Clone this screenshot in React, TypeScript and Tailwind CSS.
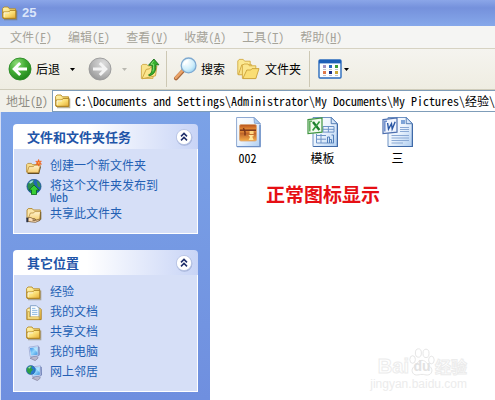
import { useState } from 'react'
import type { ReactNode } from 'react'
import clsx from 'clsx'

const MENUS = [
  { label: '文件', key: 'F' },
  { label: '编辑', key: 'E' },
  { label: '查看', key: 'V' },
  { label: '收藏', key: 'A' },
  { label: '工具', key: 'T' },
  { label: '帮助', key: 'H' },
]

const TASKS = [
  { label: '创建一个新文件夹', icon: <NewFolderIcon /> },
  { label: '将这个文件夹发布到 Web', icon: <PublishIcon /> },
  { label: '共享此文件夹', icon: <ShareFolderIcon /> },
]

const PLACES = [
  { label: '经验', icon: <FolderIcon /> },
  { label: '我的文档', icon: <DocumentsIcon /> },
  { label: '共享文档', icon: <FolderIcon /> },
  { label: '我的电脑', icon: <ComputerIcon /> },
  { label: '网上邻居', icon: <NetworkIcon /> },
]

const FILES = [
  { name: '002', icon: <PictureFileIcon /> },
  { name: '模板', icon: <ExcelFileIcon /> },
  { name: '三', icon: <WordFileIcon /> },
]

// shared gradients, referenced by id from every icon
function IconDefs() {
  return (
    <svg className="absolute h-0 w-0" aria-hidden="true">
      <defs>
        <linearGradient id="folder" x1="0" y1="0" x2="1" y2="1">
          <stop offset="0" stopColor="#fff6b8" />
          <stop offset="0.5" stopColor="#fbdf76" />
          <stop offset="1" stopColor="#e3ab33" />
        </linearGradient>
        <linearGradient id="openFolder" x1="0" y1="0" x2="0" y2="1">
          <stop offset="0" stopColor="#fff3cf" />
          <stop offset="1" stopColor="#f6cf72" />
        </linearGradient>
        <linearGradient id="paper" x1="0" y1="0" x2="1" y2="1">
          <stop offset="0" stopColor="#ffffff" />
          <stop offset="0.5" stopColor="#eaf3fd" />
          <stop offset="1" stopColor="#aecdf0" />
        </linearGradient>
        <radialGradient id="green" cx="0.35" cy="0.25" r="0.8">
          <stop offset="0" stopColor="#8fdc78" />
          <stop offset="0.5" stopColor="#43ad35" />
          <stop offset="1" stopColor="#1f851b" />
        </radialGradient>
        <radialGradient id="gray" cx="0.35" cy="0.25" r="0.8">
          <stop offset="0" stopColor="#dcdcdc" />
          <stop offset="0.6" stopColor="#b7b7b7" />
          <stop offset="1" stopColor="#979797" />
        </radialGradient>
        <radialGradient id="glass" cx="0.35" cy="0.3" r="0.8">
          <stop offset="0" stopColor="#ffffff" />
          <stop offset="0.6" stopColor="#cfeefb" />
          <stop offset="1" stopColor="#8fcdf0" />
        </radialGradient>
        <linearGradient id="screen" x1="0" y1="0" x2="1" y2="1">
          <stop offset="0" stopColor="#2f86e6" />
          <stop offset="0.5" stopColor="#8fd4fb" />
          <stop offset="1" stopColor="#3b8fe0" />
        </linearGradient>
        <linearGradient id="sunset" x1="0" y1="0" x2="0" y2="1">
          <stop offset="0" stopColor="#b5521f" />
          <stop offset="0.35" stopColor="#f0973a" />
          <stop offset="0.55" stopColor="#c0672b" />
          <stop offset="1" stopColor="#f6ae48" />
        </linearGradient>
      </defs>
    </svg>
  )
}

function FolderIcon() {
  return (
    <svg viewBox="0 0 16 16" className="h-4 w-4 shrink-0">
      <path d="M2 14.5h12.6V5.4" fill="none" stroke="#7a6a3a" strokeOpacity="0.5" strokeWidth="1.4" />
      <path d="M.6 12.8V3.6L2 2h4l1.4 1.8h6.2v9.6H1.2Z" fill="url(#folder)" stroke="#b58a24" strokeWidth="0.9" />
      <path d="M1.2 13.3V7h5.4l1.5-1.6h5.7v7.9Z" fill="url(#folder)" stroke="#a87c1c" strokeWidth="0.9" />
      <path d="M2 12V7.8h5" fill="none" stroke="#fffbe0" strokeWidth="0.9" />
    </svg>
  )
}

function NewFolderIcon() {
  return (
    <svg viewBox="0 0 16 16" className="h-4 w-4 shrink-0">
      <path d="M1.6 14.4h11l1.8-7" fill="none" stroke="#5a4a2a" strokeWidth="1.4" />
      <path d="M.6 13V5.6l1.2-1.2h3.6l1 1.2h6.4V13Z" fill="#f8dc8a" stroke="#b58a3a" strokeWidth="0.8" />
      <path d="m1 13.6 2-6h4.4l1-1.4h6l-2 7.4Z" fill="url(#openFolder)" stroke="#b58a3a" strokeWidth="0.8" />
      <path d="m12.6.4.8 2 2-.4-1.2 1.7 1.4 1.6-2.1-.1-.7 2-.9-1.9-2.1.3 1.3-1.7-1.4-1.6 2.1.2Z" fill="#f0641e" stroke="#f0641e" strokeWidth="0.6" />
      <circle cx="12.7" cy="3.8" r="0.9" fill="#ffb45a" />
    </svg>
  )
}

function PublishIcon() {
  return (
    <svg viewBox="0 0 16 16" className="h-4 w-4 shrink-0">
      <circle cx="8" cy="7.4" r="7.1" fill="#2166b4" stroke="#164a86" strokeWidth="0.6" />
      <path d="M2 4.8C4 1.9 6 .9 8.4 1.2L7 3.6 8.6 5.2 5.4 8.6 4 12C1.6 10 .9 7.4 2 4.8Z" fill="#2c8f4a" />
      <path d="M3.2 3.4C4.4 2 6 1.4 7.6 1.6L6.2 3.6 4 4.8Z" fill="#9edbe6" />
      <path d="M10.5 1.4c3 1.2 4.4 4 3.8 7L11.8 7.4l-.6-3Z" fill="#37974c" />
      <path d="m8 6 5.2 5h-2.7v4.6h-5V11H2.8Z" fill="#38cf35" stroke="#0f6a1c" strokeWidth="0.9" />
    </svg>
  )
}

function ShareFolderIcon() {
  return (
    <svg viewBox="0 0 16 16" className="h-4 w-4 shrink-0">
      <path d="M1 12V3l1.2-1.4h4L7.4 3h7v9Z" fill="#fbe6ab" stroke="#b08526" strokeWidth="0.9" />
      <path d="m2 12 2.4-6h3.2l1-1.4h6l-1.2 8.4H4Z" fill="url(#openFolder)" stroke="#b58a3a" strokeWidth="0.8" />
      <path d="M14.8 4.8v7.6l-2 1.8" fill="none" stroke="#6a531f" strokeWidth="0.9" />
      <path d="M2 11c2-1 3.2-.4 4.2.4l2.8.4c.8.3.6 1.2-.2 1.3H6.6l3.6.2 2.6-1c1-.3 1.4.7.5 1.2l-3.7 1.8-4.2-.4L2 14.4Z" fill="#fbdcb6" stroke="#6a4a20" strokeWidth="0.7" />
      <path d="M.3 10.6h1.9v4.6H.3Z" fill="#2c3345" />
    </svg>
  )
}

function DocumentsIcon() {
  return (
    <svg viewBox="0 0 16 16" className="h-4 w-4 shrink-0">
      <path d="M.8 14.6V4.6L2.4 3h11.2l1.6 1.6v10Z" fill="url(#folder)" stroke="#a87c1c" strokeWidth="0.9" />
      <path d="M4.4.7h6l2.6 2.6v9.4H4.4Z" fill="#fafdff" stroke="#7a9cc4" strokeWidth="0.9" />
      <path d="M6 3.4h3.4M6 5.4h5.4M6 7.4h5.4M6 9.4h5.4" stroke="#86b3e0" strokeWidth="0.9" />
      <path d="M1.6 14.2V6.6h1.8v5.2h9.8V14.2Z" fill="#fbe48c" stroke="#b78d2b" strokeWidth="0.6" />
    </svg>
  )
}

function MonitorShape() {
  return (
    <>
      <path d="m4 13.2 3-1.6 3.6-.4 1.6 1.8-3 2.6Z" fill="#b9b7cc" stroke="#807f9c" strokeWidth="0.7" />
      <path d="m11.6 1.2 1.8.8.2 8-2 1.8Z" fill="#5c6ea8" />
      <path d="m3 2.2 9.2-1.4.4 9.8-8.4 1Z" fill="#dfe8fa" stroke="#8495c8" strokeWidth="0.6" />
      <path d="m4 3 7.4-1.1.3 7.8-6.7.8Z" fill="url(#screen)" />
      <path d="m7 2.8 4-.6.3 5Z" fill="#b9e6ff" fillOpacity="0.9" />
    </>
  )
}

function ComputerIcon() {
  return (
    <svg viewBox="0 0 16 16" className="h-4 w-4 shrink-0">
      <MonitorShape />
    </svg>
  )
}

function NetworkIcon() {
  return (
    <svg viewBox="0 0 16 16" className="h-4 w-4 shrink-0">
      <g transform="translate(2.2 0)">
        <MonitorShape />
      </g>
      <circle cx="4.8" cy="5" r="4.5" fill="#2a78cc" stroke="#1c558e" strokeWidth="0.5" />
      <path d="M1 3.6C2.2 1.6 4 .6 6 1L5.2 3.2 7.2 4.6 5 6.8 4.4 9.2C1.4 8.4.2 6 1 3.6Z" fill="#2f9f46" />
      <path d="M2 3c.8-1 1.8-1.4 3-1.4L3.8 3.4Z" fill="#a6e2b0" />
    </svg>
  )
}

function ArrowBall({ flip, disabled }: { flip?: boolean; disabled?: boolean }) {
  return (
    <svg viewBox="0 0 24 24" className={clsx('h-6 w-6 shrink-0', flip && '-scale-x-100')}>
      <circle cx="12" cy="12" r="11" fill={disabled ? 'url(#gray)' : 'url(#green)'} stroke={disabled ? '#9a9a9a' : '#2b8a26'} strokeWidth="0.9" />
      <path d="M19 12H6.5M12.2 6 6.2 12l6 6" fill="none" stroke={disabled ? '#f3f3f3' : '#ffffff'} strokeWidth="3" />
    </svg>
  )
}

function UpFolderIcon() {
  return (
    <svg viewBox="0 0 20 22" className="h-6 w-5 shrink-0">
      <path d="M1.4 20.4V7.6L2.8 6.4h4l1.2 1.5h5v12.5Z" fill="#f9e48f" stroke="#d0a944" strokeWidth="0.9" />
      <path d="m2 20.8 4.2-9.4 3.4-.6 1.3-1.6 6-1.2-1.4 9.8Z" fill="#fbe58c" stroke="#c9a03c" strokeWidth="0.9" />
      <path d="M8.6 16.8c3-1.2 3.8-4 3.5-9.6H8.6L13.9 1l5 5.8h-3.1c.4 6.6-1.8 9.8-6.6 11Z" fill="#35b02d" stroke="#176f17" strokeWidth="0.9" />
      <path d="M13.8 2.8 11 6.2h2.4c.2 3 .2 5.4-.6 7.2" fill="none" stroke="#8ee27c" strokeWidth="0.9" />
    </svg>
  )
}

function SearchIcon() {
  return (
    <svg viewBox="0 0 24 24" className="h-6 w-6 shrink-0">
      <path d="m3 21.4 7.4-8" stroke="#a8683c" strokeWidth="4" strokeLinecap="round" />
      <path d="m2.8 20.8 7.2-7.6" stroke="#eba468" strokeWidth="2.4" strokeLinecap="round" />
      <circle cx="15.6" cy="8.4" r="7.4" fill="url(#glass)" stroke="#7fa9d0" strokeWidth="1.3" />
      <path d="M11 8.2c0-2.6 2-4.4 4.4-4.4" fill="none" stroke="#ffffff" strokeWidth="1.6" />
    </svg>
  )
}

function FoldersIcon() {
  return (
    <svg viewBox="0 0 24 22" className="h-6 w-6 shrink-0">
      <path d="M.8 16.4V3L2.2 1.4h4l1.4 1.8h5.6v13.2Z" fill="#fbe892" stroke="#d3aa42" strokeWidth="0.9" />
      <path d="m1.4 16.8 3.4-10h10l-2.6 10Z" fill="#fae48c" stroke="#d0a53c" strokeWidth="0.9" />
      <path d="M5.4 20.2V7.6L7 6h4l1.4 1.8h6.4v12.4Z" fill="#fbe68e" stroke="#d3aa42" strokeWidth="0.9" />
      <path d="m5.8 20.6 4-8.6h4l1.2-1.4h7l-3.2 10Z" fill="#fade74" stroke="#cba038" strokeWidth="0.9" />
    </svg>
  )
}

function ViewsIcon() {
  return (
    <svg viewBox="0 0 24 20" className="h-5 w-6 shrink-0">
      <rect x="1" y="1" width="22" height="18" rx="1" fill="#fdfeff" stroke="#2a6bbd" strokeWidth="1.4" />
      <path d="M1 1h22v3.4H1Z" fill="#1c5fb8" />
      <path d="M5 6h3v3H5Z" fill="#a093c4" />
      <path d="M11 6h3v3h-3Z" fill="#2467c0" />
      <path d="M17 6h3v3h-3Z" fill="#3c9c3a" />
      <path d="M5 12h3v3H5Z" fill="#e0794a" />
      <path d="M11 12h3v3h-3Z" fill="#1b2f86" />
      <path d="M17 12h3v3h-3Z" fill="#c9a636" />
      <path d="M5 10.5h3M11 10.5h3M17 10.5h3M5 16.5h3M11 16.5h3M17 16.5h3" stroke="#a9b2bf" strokeWidth="0.8" />
    </svg>
  )
}

function Caret({ disabled }: { disabled?: boolean }) {
  return (
    <svg viewBox="0 0 5 3" className="h-[3px] w-[5px] shrink-0">
      <path d="M0 0h5L2.5 3Z" fill={disabled ? '#b9b8b0' : '#000000'} />
    </svg>
  )
}

function PictureFileIcon() {
  return (
    <svg viewBox="0 0 32 32" className="h-8 w-8">
      <path d="M4.6 1.5h17.6l6 6v23H4.6Z" fill="url(#paper)" stroke="#8fa9d2" />
      <path d="M28 9v21.6H5" fill="none" stroke="#6c8fc6" strokeWidth="1.4" />
      <path d="m22 1.5.4 5.7 5.8.5Z" fill="#a9cdf2" stroke="#7c9bc8" strokeWidth="0.8" />
      <rect x="7.5" y="8.5" width="17" height="16.5" rx="1.5" fill="url(#sunset)" stroke="#d9a676" strokeWidth="0.8" />
      <path d="M8 13.4h16v1.6H8Z" fill="#7d3a1c" />
      <path d="M11.4 12 13 16v3.6" fill="none" stroke="#7a3518" strokeWidth="1.4" />
      <path d="M17.6 15h4v3h-4Z" fill="#ffd880" />
      <path d="M16.4 19h5.4l-.6 1.6h-1l1.4 3.4h-5l1.4-3Z" fill="#ffe79a" />
    </svg>
  )
}

function OfficePage({ children }: { children: ReactNode }) {
  return (
    <svg viewBox="0 0 32 32" className="h-8 w-8">
      <path d="M6 1.5h18.4l6 6v23H6Z" fill="url(#paper)" stroke="#6f93c4" />
      <path d="M30.4 8v22.5H6.4" fill="none" stroke="#3f6aa8" strokeWidth="1.2" />
      <path d="M24.2 1.5v6.2h6.2Z" fill="#d5e6fa" stroke="#4874ae" strokeWidth="0.9" />
      {children}
    </svg>
  )
}

function ExcelFileIcon() {
  return (
    <OfficePage>
      <path d="M16 10.5h11v5.6H16ZM9.5 19.5H19M9.5 23.2H19M9.5 27H27M9.5 18v9M14 18v9M21.4 10.5v5.6M16 13.3h11" fill="none" stroke="#6d93c6" />
      <path d="M20.5 27v-6h2v6m0-3.5h2V27m0-8h2v8" fill="none" stroke="#537fb9" />
      <path d="M1 3.6 15 2v14.2L1 17.6Z" fill="#f2fbef" stroke="#3f9440" strokeWidth="1.2" />
      <path d="M2.8 15.4V5.2h2.4" fill="none" stroke="#5fae5c" strokeWidth="1.5" />
      <path d="m6 6 6.4 8" stroke="#1d7d2e" strokeWidth="2.4" />
      <path d="m12.6 5.6-7 9" stroke="#2f9a3d" strokeWidth="1.6" />
    </OfficePage>
  )
}

function WordFileIcon() {
  return (
    <OfficePage>
      <path d="M18 11.5h9M18 13.5h9M18 15.5h9M9.5 19.5H27M9.5 22H27M9.5 24.5H27M9.5 27H21" stroke="#8aa9d4" />
      <path d="M19 4h4v4h-4Z" fill="#7fa5d8" />
      <path d="M1 3.6 15 2v14.2L1 17.6Z" fill="#f0f5fe" stroke="#4d6fae" strokeWidth="1.2" />
      <path d="M2.8 15.4V5.2H5" fill="none" stroke="#6f8fcc" strokeWidth="1.5" />
      <path d="m5.6 7 .9 6 3-5.4.7 5.4 3-7.2" fill="none" stroke="#2856a4" strokeWidth="1.4" />
    </OfficePage>
  )
}

function TaskPanel({ title, items }: { title: string; items: { label: string; icon: ReactNode }[] }) {
  const [open, setOpen] = useState(true)

  return (
    <section>
      <div className="flex h-[25px] items-center justify-between rounded-t bg-linear-to-r from-white from-40% to-[#c8d4f6] pr-1 pl-3.5">
        <h2 className="text-[13px] font-bold text-[#1f55a8]">{title}</h2>
        <button
          type="button"
          aria-label={title}
          aria-expanded={open}
          onClick={() => setOpen(!open)}
          className="flex h-5 w-5 items-center justify-center"
        >
          <svg viewBox="0 0 20 20" className={clsx('h-5 w-5', !open && 'rotate-180')}>
            <circle cx="10.4" cy="10.8" r="8" fill="#8c9cc8" fillOpacity="0.6" />
            <circle cx="10" cy="10" r="7.6" fill="#ffffff" stroke="#b4c0e2" strokeWidth="0.8" />
            <path d="m7 9.4 3-3 3 3M7 13.4l3-3 3 3" fill="none" stroke="#1f2f6b" strokeWidth="1.5" />
          </svg>
        </button>
      </div>
      {open && (
        <ul className="border border-t-0 border-white bg-[#d6dff7] py-2 pr-8 pl-3">
          {items.map((item) => (
            <li key={item.label} className="min-h-5">
              <a href="#" className="flex items-start gap-2 text-[#235fb4] hover:underline">
                <span className="pt-0.5">{item.icon}</span>
                <span className="py-0.5 text-xs leading-3">{item.label}</span>
              </a>
            </li>
          ))}
        </ul>
      )}
    </section>
  )
}

function Watermark() {
  return (
    <div className="absolute right-7 bottom-2 flex flex-col items-end text-white select-none">
      <div className="flex items-end font-bold [-webkit-text-stroke:1px_#ececec]">
        <span className="font-['Liberation_Sans',sans-serif] text-xl leading-5">Bai</span>
        <span className="relative flex h-7 w-[26px] items-end justify-center">
          <svg viewBox="0 0 26 28" className="absolute inset-0 h-7 w-[26px]" fill="#ffffff" stroke="#e6e6e6">
            <ellipse cx="3.6" cy="11.5" rx="2.8" ry="3.8" />
            <ellipse cx="9.4" cy="5" rx="3" ry="4.2" />
            <ellipse cx="17" cy="5.4" rx="3" ry="4.2" />
            <ellipse cx="22.4" cy="12" rx="2.8" ry="3.8" />
            <path d="M13 12.4c4 0 5.4 4 8 6.2 3.6 3 1.8 8.4-2.6 8.4-2.2 0-3-.6-5.4-.6s-3.2.6-5.4.6c-4.4 0-6.2-5.4-2.6-8.4 2.6-2.2 4-6.2 8-6.2Z" />
          </svg>
          <span className="relative font-['Liberation_Sans',sans-serif] text-sm leading-5 text-[#e2e2e2] [-webkit-text-stroke:0]">du</span>
        </span>
        <span className="text-base leading-5">经验</span>
      </div>
      <div className="font-['Liberation_Sans',sans-serif] text-xs leading-4 text-[#ececec]">jingyan.baidu.com</div>
    </div>
  )
}

export default function App() {
  const [address, setAddress] = useState('C:\\Documents and Settings\\Administrator\\My Documents\\My Pictures\\经验\\25')

  return (
    <div className="flex min-h-screen flex-col bg-[#f2f1ea] font-['Noto_Sans_Mono_CJK_SC','Noto_Sans_CJK_SC',sans-serif] text-xs text-black">
      <IconDefs />

      <header className="flex h-[26px] items-center gap-1 bg-linear-to-b from-[#8ba6e8] via-[#7591dc] via-30% to-[#86a8ea] px-0.5">
        <FolderIcon />
        <h1 className="font-['Liberation_Sans','Noto_Sans_CJK_SC',sans-serif] text-[13px] font-bold text-[#dbe6fa]">25</h1>
      </header>

      <nav className="flex h-[23px] items-center gap-4 overflow-hidden border-b border-[#d6d2c2] bg-[#f5f5f3] px-2.5 text-[#a5a399]">
        {MENUS.map((menu) => (
          <button key={menu.key} type="button" className="shrink-0 whitespace-nowrap">
            {menu.label}(<u>{menu.key}</u>)
          </button>
        ))}
      </nav>

      <div className="flex h-[41px] items-center border-b border-[#cfccba] bg-linear-to-b from-[#f5f4ef] to-[#efede2] pl-2">
        <button type="button" className="flex shrink-0 items-center gap-1">
          <ArrowBall />
          后退
        </button>
        <button type="button" aria-label="后退" className="flex h-6 w-6 shrink-0 items-center justify-center">
          <Caret />
        </button>
        <button type="button" aria-label="前进" disabled className="ml-1 shrink-0">
          <ArrowBall flip disabled />
        </button>
        <button type="button" aria-label="前进" disabled className="flex h-6 w-6 shrink-0 items-center justify-center">
          <Caret disabled />
        </button>
        <button type="button" aria-label="向上" className="ml-1 shrink-0">
          <UpFolderIcon />
        </button>
        <div className="mx-1.5 h-9 w-px shrink-0 bg-[#cdc8b4]" />
        <button type="button" className="flex shrink-0 items-center gap-1">
          <SearchIcon />
          搜索
        </button>
        <button type="button" className="ml-3 flex shrink-0 items-center gap-1">
          <FoldersIcon />
          文件夹
        </button>
        <div className="mx-2 h-9 w-px shrink-0 bg-[#cdc8b4]" />
        <button type="button" aria-label="查看" className="flex shrink-0 items-center gap-0.5">
          <ViewsIcon />
          <Caret />
        </button>
      </div>

      <div className="flex h-[22px] items-stretch">
        <label htmlFor="address" className="flex w-[52px] shrink-0 items-center pl-1.5 whitespace-nowrap text-[#8f8d84]">
          地址(<u>D</u>)
        </label>
        <div className="flex min-w-0 flex-1 items-center gap-1 border-y border-l border-[#7f9db9] bg-white pl-0.5">
          <FolderIcon />
          <input
            id="address"
            value={address}
            onChange={(e) => setAddress(e.target.value)}
            className="min-w-0 flex-1 outline-none"
          />
        </div>
      </div>

      <div className="flex flex-1">
        <aside className="flex w-[210px] shrink-0 flex-col gap-4 border-l border-[#d5def5] bg-linear-to-b from-[#7ba2e7] to-[#6f8fdf] px-3 pt-3 pb-2">
          <TaskPanel title="文件和文件夹任务" items={TASKS} />
          <TaskPanel title="其它位置" items={PLACES} />
        </aside>

        <main className="relative min-w-0 flex-1 bg-white pt-1">
          <ul className="flex flex-wrap">
            {FILES.map((file) => (
              <li key={file.name} className="flex w-[75px] flex-col items-center gap-0.5">
                {file.icon}
                <span className="leading-4">{file.name}</span>
              </li>
            ))}
          </ul>
          <p className="mt-4 pl-14 font-['Noto_Sans_CJK_SC',sans-serif] text-[19px] leading-6 font-bold text-[#e60f14]">正常图标显示</p>
          <Watermark />
        </main>
      </div>
    </div>
  )
}
